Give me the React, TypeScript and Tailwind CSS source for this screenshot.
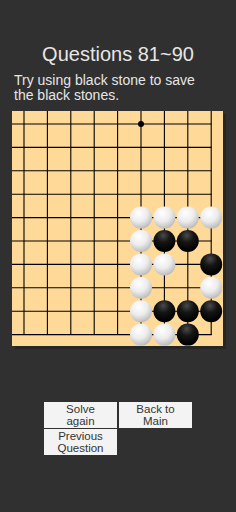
import React from "react";

type Stone = { c: number; r: number; black?: boolean };

const GAP = 23.4;
const X0 = 12;
const Y0 = 13;

const stones: Stone[] = [
  { c: 5, r: 4 },
  { c: 6, r: 4 },
  { c: 7, r: 4 },
  { c: 8, r: 4 },
  { c: 5, r: 5 },
  { c: 6, r: 5, black: true },
  { c: 7, r: 5, black: true },
  { c: 5, r: 6 },
  { c: 6, r: 6 },
  { c: 8, r: 6, black: true },
  { c: 5, r: 7 },
  { c: 8, r: 7 },
  { c: 5, r: 8 },
  { c: 6, r: 8, black: true },
  { c: 7, r: 8, black: true },
  { c: 8, r: 8, black: true },
  { c: 5, r: 9 },
  { c: 6, r: 9 },
  { c: 7, r: 9, black: true },
];

const Board = () => {
  const lastX = X0 + 8 * GAP;
  const lastY = Y0 + 9 * GAP;
  return (
    <div className="ml-3 h-[235px] w-[211px] bg-[#ffd998] shadow-[3px_3px_0_0_#262626]">
      <svg width="211" height="235" viewBox="0 0 211 235">
        <defs>
          <radialGradient id="white" cx="40%" cy="30%" r="70%">
            <stop offset="0%" stopColor="#ffffff" />
            <stop offset="55%" stopColor="#ececec" />
            <stop offset="100%" stopColor="#bdbdbd" />
          </radialGradient>
          <radialGradient id="black" cx="45%" cy="25%" r="70%">
            <stop offset="0%" stopColor="#4a4a4a" />
            <stop offset="45%" stopColor="#151515" />
            <stop offset="100%" stopColor="#000000" />
          </radialGradient>
        </defs>
        {Array.from({ length: 10 }, (_, r) => (
          <line
            key={"h" + r}
            x1={0}
            x2={lastX + 0.5}
            y1={Y0 + r * GAP}
            y2={Y0 + r * GAP}
            stroke="#000"
            strokeWidth={1.1}
          />
        ))}
        {Array.from({ length: 9 }, (_, c) => (
          <line
            key={"v" + c}
            x1={X0 + c * GAP}
            x2={X0 + c * GAP}
            y1={0}
            y2={lastY + 0.5}
            stroke="#000"
            strokeWidth={1.1}
          />
        ))}
        <circle cx={X0 + 5 * GAP} cy={Y0} r={3} fill="#000" />
        {stones.map((s) => (
          <circle
            key={`${s.c}-${s.r}`}
            cx={X0 + s.c * GAP}
            cy={Y0 + s.r * GAP}
            r={11}
            fill={s.black ? "url(#black)" : "url(#white)"}
          />
        ))}
      </svg>
    </div>
  );
};

const Btn = ({ children }: { children: React.ReactNode }) => (
  <button className="flex h-[26px] w-[73px] flex-col items-center justify-center bg-[#f3f3f3] text-[11.5px] leading-[12.5px] text-[#333]">
    {children}
  </button>
);

export default function App() {
  return (
    <div
      className="flex h-[512px] w-[236px] flex-col bg-[#303030]"
      style={{ fontFamily: '"Liberation Sans", Arial, sans-serif' }}
    >
      <h1 className="mt-[43px] text-center text-[20px] leading-[23px] text-[#e6e6e6]">
        Questions 81~90
      </h1>
      <p className="ml-[14px] mt-[7px] text-[14px] leading-[15px] text-[#e6e6e6]">
        Try using black stone to save
        <br />
        the black stones.
      </p>
      <div className="mt-[8px]">
        <Board />
      </div>
      <div className="ml-[44px] mt-[56px] flex gap-[2px]">
        <div className="flex flex-col gap-px">
          <Btn>
            <span>Solve</span>
            <span>again</span>
          </Btn>
          <Btn>
            <span>Previous</span>
            <span>Question</span>
          </Btn>
        </div>
        <Btn>
          <span>Back to</span>
          <span>Main</span>
        </Btn>
      </div>
    </div>
  );
}
